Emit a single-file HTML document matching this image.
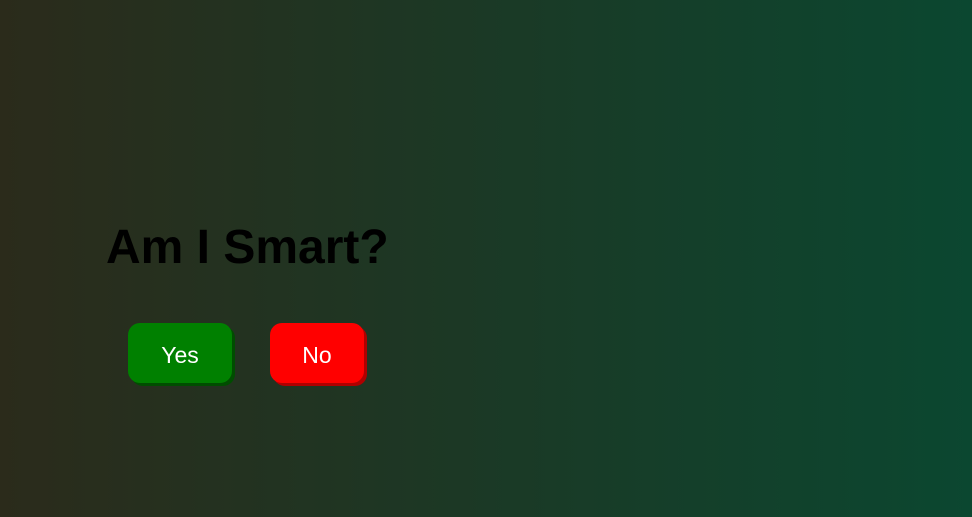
<!DOCTYPE html>
<html><head><style>
html,body{margin:0;width:972px;height:517px;overflow:hidden}
body{background:linear-gradient(to right,#2b2b1b,#0b4730);font-family:"Liberation Sans",sans-serif;position:relative}
h1{position:absolute;left:106px;top:219px;margin:0;font-size:48px;font-weight:bold;color:#000;line-height:58px}
.b{position:absolute;top:323px;height:60px;border-radius:12px;color:#fff;font-size:23px;text-align:center;line-height:64px}
.y{left:128px;width:104px;background:#008000;box-shadow:3px 3px 0 #004d00}
.n{left:270px;width:94px;background:#f00;box-shadow:3px 3px 0 #b00000}
</style></head><body>
<h1>Am I Smart?</h1>
<div class="b y">Yes</div>
<div class="b n">No</div>
</body></html>
